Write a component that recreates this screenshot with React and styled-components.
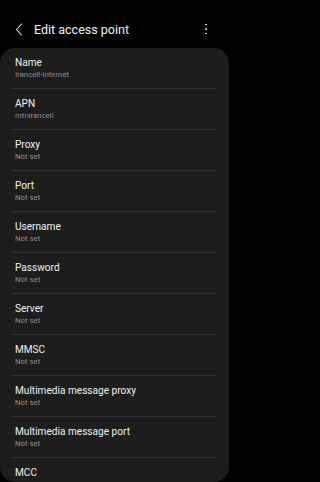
import React from "react";
import styled, { createGlobalStyle } from "styled-components";

const GlobalStyle = createGlobalStyle`
  html, body {
    margin: 0;
    padding: 0;
    background: #000;
  }
  body {
    font-family: Roboto, "Noto Sans", "Liberation Sans", sans-serif;
    -webkit-font-smoothing: antialiased;
  }
`;

const Screen = styled.div`
  width: 229px;
  height: 482px;
  background: #000;
  display: flex;
  flex-direction: column;
  overflow: hidden;
`;

const Header = styled.div`
  height: 48px;
  flex-shrink: 0;
  display: flex;
  align-items: center;
  padding: 10px 12px 0 13px;
  box-sizing: border-box;
`;

const BackButton = styled.div`
  width: 12px;
  height: 14px;
  display: flex;
  align-items: center;
  justify-content: center;
  margin-right: 9px;
`;

const Title = styled.h1`
  flex: 1;
  margin: 0;
  font-size: 12.5px;
  font-weight: 400;
  color: #f2f2f2;
`;

const MoreButton = styled.div`
  width: 8px;
  display: flex;
  flex-direction: column;
  align-items: center;
  gap: 2.7px;
  margin-right: 7px;
`;

const Dot = styled.span`
  width: 1.8px;
  height: 1.8px;
  border-radius: 50%;
  background: #e6e6e6;
`;

const Card = styled.div`
  flex: 1;
  background: #1d1d1d;
  border-radius: 15px;
  overflow: hidden;
`;

const Row = styled.div`
  padding: 8px 15px;
  display: flex;
  flex-direction: column;
`;

const RowTitle = styled.div`
  font-size: 10.1px;
  line-height: 14px;
  color: #f0f0f0;
  white-space: nowrap;
`;

const RowValue = styled.div`
  font-size: 7.8px;
  line-height: 10px;
  color: #8d8d8d;
  white-space: nowrap;
`;

const Divider = styled.div`
  height: 1px;
  margin: 0 12px;
  background: #323232;
`;

const fields = [
  ["Name", "Irancell-Internet"],
  ["APN", "mtnirancell"],
  ["Proxy", "Not set"],
  ["Port", "Not set"],
  ["Username", "Not set"],
  ["Password", "Not set"],
  ["Server", "Not set"],
  ["MMSC", "Not set"],
  ["Multimedia message proxy", "Not set"],
  ["Multimedia message port", "Not set"],
  ["MCC", "432"],
];

export default function App() {
  return (
    <Screen>
      <GlobalStyle />
      <Header>
        <BackButton>
          <svg width="8" height="13" viewBox="0 0 8 13" fill="none">
            <path
              d="M6.5 1 L1.5 6.5 L6.5 12"
              stroke="#e8e8e8"
              strokeWidth="1.1"
              strokeLinecap="round"
              strokeLinejoin="round"
            />
          </svg>
        </BackButton>
        <Title>Edit access point</Title>
        <MoreButton>
          <Dot />
          <Dot />
          <Dot />
        </MoreButton>
      </Header>
      <Card>
        {fields.map(([label, value], i) => (
          <React.Fragment key={label}>
            {i > 0 && <Divider />}
            <Row>
              <RowTitle>{label}</RowTitle>
              <RowValue>{value}</RowValue>
            </Row>
          </React.Fragment>
        ))}
      </Card>
    </Screen>
  );
}
